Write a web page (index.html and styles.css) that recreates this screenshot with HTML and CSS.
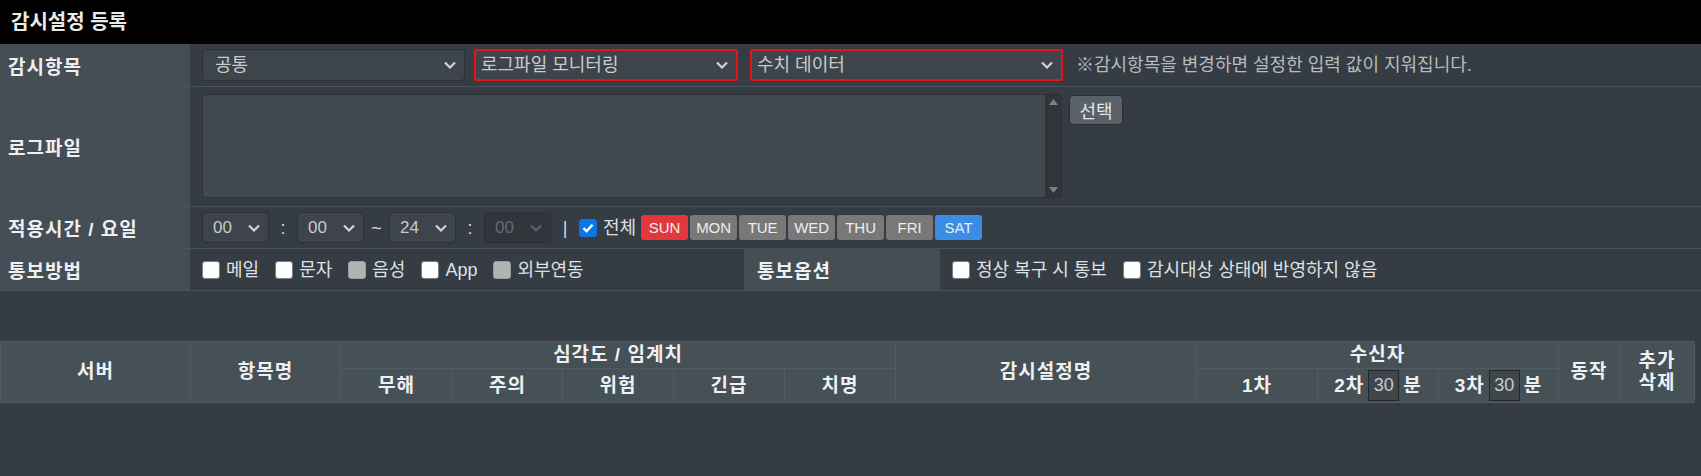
FILE: index.html
```html
<!DOCTYPE html>
<html lang="ko">
<head>
  <meta charset="UTF-8" />
  <title>감시설정 등록</title>
  <link rel="stylesheet" href="styles.css">
</head>
<body>

  <div class="title">감시설정 등록</div>

  <div class="form">
    <div class="row row-item">
      <div class="label">감시항목</div>
      <div class="value">
        <div class="select sel-common"><span>공통</span><svg class="chev" width="12" height="8" viewBox="0 0 12 8"><path d="M1 1.5l5 5 5-5" /></svg></div>
        <div class="select sel-log hl"><span>로그파일 모니터링</span><svg class="chev" width="12" height="8" viewBox="0 0 12 8"><path d="M1 1.5l5 5 5-5" /></svg></div>
        <div class="select sel-data hl"><span>수치 데이터</span><svg class="chev" width="12" height="8" viewBox="0 0 12 8"><path d="M1 1.5l5 5 5-5" /></svg></div>
        <span class="note">※감시항목을 변경하면 설정한 입력 값이 지워집니다.</span>
      </div>
    </div>

    <div class="row row-file">
      <div class="label">로그파일</div>
      <div class="value">
        <div class="textarea">
          <div class="area"></div>
          <div class="scroll">
            <svg width="9" height="6" viewBox="0 0 9 6"><path d="M0 6L4.5 0 9 6z" /></svg>
            <svg width="9" height="6" viewBox="0 0 9 6"><path d="M0 0h9L4.5 6z" /></svg>
          </div>
        </div>
        <button class="btn">선택</button>
      </div>
    </div>

    <div class="row row-time">
      <div class="label">적용시간 / 요일</div>
      <div class="value">
        <div class="select time"><span>00</span><svg class="chev" width="12" height="8" viewBox="0 0 12 8"><path d="M1 1.5l5 5 5-5" /></svg></div>
        <span class="sep">:</span>
        <div class="select time"><span>00</span><svg class="chev" width="12" height="8" viewBox="0 0 12 8"><path d="M1 1.5l5 5 5-5" /></svg></div>
        <span class="sep tilde">~</span>
        <div class="select time"><span>24</span><svg class="chev" width="12" height="8" viewBox="0 0 12 8"><path d="M1 1.5l5 5 5-5" /></svg></div>
        <span class="sep">:</span>
        <div class="select time disabled"><span>00</span><svg class="chev" width="12" height="8" viewBox="0 0 12 8"><path d="M1 1.5l5 5 5-5" /></svg></div>
        <span class="sep bar">|</span>
        <span class="chk checked"><svg width="12" height="10" viewBox="0 0 12 10"><path d="M1.5 5.2l3 3 6-6.5" /></svg></span>
        <span class="chk-text all">전체</span>
        <div class="days">
          <span class="day sun">SUN</span>
          <span class="day">MON</span>
          <span class="day">TUE</span>
          <span class="day">WED</span>
          <span class="day">THU</span>
          <span class="day">FRI</span>
          <span class="day sat">SAT</span>
        </div>
      </div>
    </div>

    <div class="row row-notify">
      <div class="label">통보방법</div>
      <div class="value methods">
        <span class="chk"></span><span class="chk-text">메일</span>
        <span class="chk"></span><span class="chk-text">문자</span>
        <span class="chk off"></span><span class="chk-text">음성</span>
        <span class="chk"></span><span class="chk-text">App</span>
        <span class="chk off"></span><span class="chk-text">외부연동</span>
      </div>
      <div class="label label-opt">통보옵션</div>
      <div class="value">
        <span class="chk"></span><span class="chk-text">정상 복구 시 통보</span>
        <span class="chk"></span><span class="chk-text">감시대상 상태에 반영하지 않음</span>
      </div>
    </div>
  </div>

  <table class="grid">
    <colgroup>
      <col style="width:190px"><col style="width:150px">
      <col style="width:112px"><col style="width:110px"><col style="width:111px"><col style="width:111px"><col style="width:111px">
      <col style="width:301px">
      <col style="width:121px"><col style="width:121px"><col style="width:120px">
      <col style="width:61px"><col style="width:75px">
    </colgroup>
    <tr class="head1">
      <th rowspan="2">서버</th>
      <th rowspan="2">항목명</th>
      <th colspan="5">심각도 / 임계치</th>
      <th rowspan="2">감시설정명</th>
      <th colspan="3">수신자</th>
      <th rowspan="2">동작</th>
      <th rowspan="2" class="two">추가<br>삭제</th>
    </tr>
    <tr class="head2">
      <th>무해</th>
      <th>주의</th>
      <th>위험</th>
      <th>긴급</th>
      <th>치명</th>
      <th>1차</th>
      <th><div class="rcv">2차 <span class="min">30</span>분</div></th>
      <th><div class="rcv">3차 <span class="min">30</span>분</div></th>
    </tr>
  </table>

</body>
</html>
```

FILE: styles.css
```css
body {
  margin: 0;
  background: #363c43;
  font-family: "Liberation Sans", "Noto Sans CJK KR", sans-serif;
  font-size: 18px;
  color: #d6d9dc;
}

.title {
  height: 44px;
  line-height: 44px;
  background: #000;
  color: #e9eaeb;
  font-weight: bold;
  font-size: 20px;
  padding-left: 11px;
}

.row {
  display: flex;
  border-bottom: 1px solid #4b5359;
}
.label {
  width: 190px;
  flex: none;
  box-sizing: border-box;
  display: flex;
  align-items: center;
  padding-left: 8px;
  background: #454e55;
  color: #eef0f2;
  font-weight: bold;
  font-size: 19px;
  letter-spacing: 1px;
}
.value {
  flex: 1;
  display: flex;
  align-items: center;
  padding: 0 12px;
  line-height: 24px;
}

/* selects */
.select {
  box-sizing: border-box;
  display: flex;
  align-items: center;
  justify-content: space-between;
  background: #3d444b;
  border: 1px solid #2b3035;
  border-radius: 4px;
  color: #c9cbcd;
  padding: 0 8px 0 12px;
}
.chev path { fill: none; stroke: #d0d2d4; stroke-width: 2.2; }
.row-item .value { padding-top: 5px; padding-bottom: 5px; }
.row-item .select { height: 32px; font-size: 18px; }
.sel-common { width: 263px; }
.sel-log { width: 264px; margin-left: 9px; }
.sel-data { width: 313px; margin-left: 12px; }
.hl { border: 2px solid #e3151b; border-radius: 2px; padding-left: 5px; }
.note { margin-left: 13px; color: #b7bbbf; font-size: 18px; }

/* log file */
.row-file .value { align-items: flex-start; padding-top: 7px; padding-bottom: 8px; }
.textarea {
  width: 860px;
  height: 104px;
  display: flex;
  background: #41484f;
  border: 1px solid #2c3136;
  border-radius: 3px;
  box-sizing: border-box;
}
.area { flex: 1; }
.scroll {
  width: 16px;
  background: #30353a;
  display: flex;
  flex-direction: column;
  justify-content: space-between;
  align-items: center;
  padding: 4px 0;
}
.scroll path { fill: #7b8187; }
.btn {
  margin-left: 7px;
  margin-top: 1px;
  width: 54px;
  height: 30px;
  background: #596067;
  border: 1px solid #2a2f33;
  border-radius: 4px;
  color: #e4e6e8;
  font-family: inherit;
  font-size: 18px;
  padding: 0;
}

/* time */
.row-time .value { padding-top: 5px; padding-bottom: 5px; }
.select.time { width: 67px; height: 31px; padding-left: 10px; font-size: 17px; }
.select.disabled { background: #30363b; color: #646a70; }
.select.disabled .chev path { stroke: #5d6369; }
.sep { width: 28px; text-align: center; color: #d6d9dc; }
.sep.tilde { width: 25px; }
.sep.bar { width: 28px; }

.chk {
  box-sizing: border-box;
  width: 18px;
  height: 18px;
  flex: none;
  background: #fff;
  border: 1px solid #7a7f84;
  border-radius: 3px;
  display: flex;
  align-items: center;
  justify-content: center;
}
.chk.off { background: #b1b3b5; border-color: #9a9da0; }
.chk.checked { background: #0b75e6; border-color: #0b75e6; }
.chk.checked path { fill: none; stroke: #fff; stroke-width: 2.4; }
.chk-text { margin-left: 6px; margin-right: 16px; color: #dfe1e3; }
.chk-text.all { margin-right: 5px; }

.days { display: flex; gap: 2px; }
.day {
  width: 47px;
  height: 25px;
  line-height: 25px;
  text-align: center;
  background: #787878;
  border-radius: 3px;
  color: #eee;
  font-size: 15px;
}
.day.sun { background: #e0383e; }
.day.sat { background: #3a8ce4; }

/* notify */
.row-notify { height: 41px; }
.value.methods { flex: none; width: 554px; box-sizing: border-box; }
.label-opt { width: 196px; padding-left: 13px; }

/* header grid */
.grid {
  margin-top: 50px;
  width: 1694px;
  table-layout: fixed;
  border-collapse: collapse;
  border-top: 1px solid #2b3035;
}
.grid th {
  background: #465057;
  border: 1px solid #525b62;
  color: #eef0f2;
  font-size: 19px;
  letter-spacing: 1px;
  line-height: 22px;
  padding: 0;
}
.head1 th { height: 26px; }
.head2 th { height: 33px; }
.rcv { display: flex; justify-content: center; align-items: center; gap: 4px; }
.min {
  display: inline-block;
  width: 31px;
  height: 31px;
  box-sizing: border-box;
  line-height: 29px;
  border: 1px solid #24282c;
  background: #3f474d;
  color: #c8cacc;
  font-weight: normal;
  font-size: 18px;
  letter-spacing: 0;
}
```
